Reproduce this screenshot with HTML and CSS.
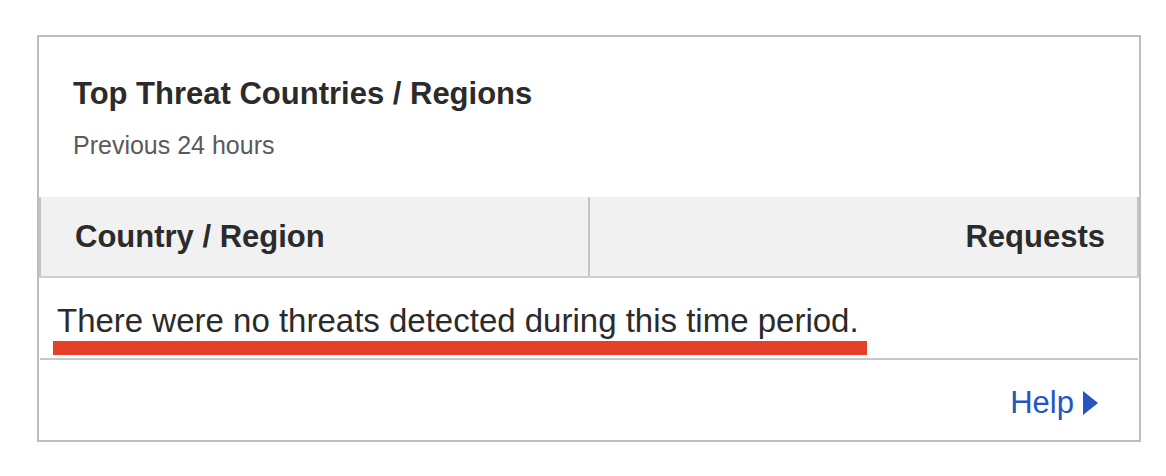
FILE: index.html
```html
<!DOCTYPE html>
<html lang="en">
<head>
  <meta charset="UTF-8">
  <meta name="viewport" content="width=device-width, initial-scale=1.0">
  <title>Top Threat Countries / Regions</title>
  <link rel="stylesheet" href="styles.css">
</head>
<body>
  <div class="card">
    <div class="card-header">
      <h2>Top Threat Countries / Regions</h2>
      <p class="subtitle">Previous 24 hours</p>
    </div>

    <table class="threats">
      <thead>
        <tr>
          <th class="col-country">Country / Region</th>
          <th class="col-requests">Requests</th>
        </tr>
      </thead>
      <tbody>
        <tr>
          <td colspan="2" class="empty">
            <span class="empty-text">There were no threats detected during this time period.</span>
            <span class="mark"></span>
          </td>
        </tr>
      </tbody>
    </table>

    <div class="card-footer">
      <a href="#" class="help">Help<span class="arrow"></span></a>
    </div>
  </div>
</body>
</html>
```

FILE: styles.css
```css
body {
  margin: 0;
  padding: 35px 26px 0 37px;
  background: #fff;
  font-family: "Liberation Sans", Arial, sans-serif;
  color: #2b2b2b;
}

.card {
  width: 1100px;
  border: 2px solid #bdbdbd;
  background: #fff;
}

.card-header {
  padding: 38px 34px 0;
  height: 122px;
}

.card-header h2 {
  margin: 0;
  font-size: 31px;
  font-weight: bold;
  line-height: 38px;
  color: #2b2b2b;
}

.subtitle {
  margin: 17px 0 0;
  font-size: 25px;
  line-height: 30px;
  color: #5a5a5a;
}

.threats {
  width: 100%;
  border-collapse: collapse;
}

.threats th {
  background: #f1f1f1;
  height: 79px;
  padding: 0 32px;
  font-size: 31px;
  font-weight: bold;
  color: #2b2b2b;
  border-bottom: 2px solid #cfcfcf;
  border-left: 2px solid #c4c4c4;
}

.threats th.col-country {
  width: 50%;
  text-align: left;
  padding-left: 34px;
}

.threats th.col-requests {
  text-align: right;
  border-right: 2px solid #c4c4c4;
}

.empty {
  padding: 26px 0 3px 17px;
  vertical-align: top;
  border-bottom: 2px solid #c8c8c8;
}

.empty-text {
  display: block;
  font-size: 33px;
  line-height: 34px;
  color: #2b2b2b;
}

.mark {
  display: block;
  width: 814px;
  height: 14px;
  margin: 3px 0 0 -4px;
  background: #e5402a;
}

.card-footer {
  height: 74px;
  padding: 6px 41px 0 0;
  display: flex;
  align-items: center;
  justify-content: flex-end;
}

.help {
  display: flex;
  align-items: center;
  color: #2455c2;
  font-size: 31px;
  text-decoration: none;
}

.arrow {
  width: 0;
  height: 0;
  margin-left: 9px;
  border-top: 12px solid transparent;
  border-bottom: 12px solid transparent;
  border-left: 15px solid #2455c2;
}
```
